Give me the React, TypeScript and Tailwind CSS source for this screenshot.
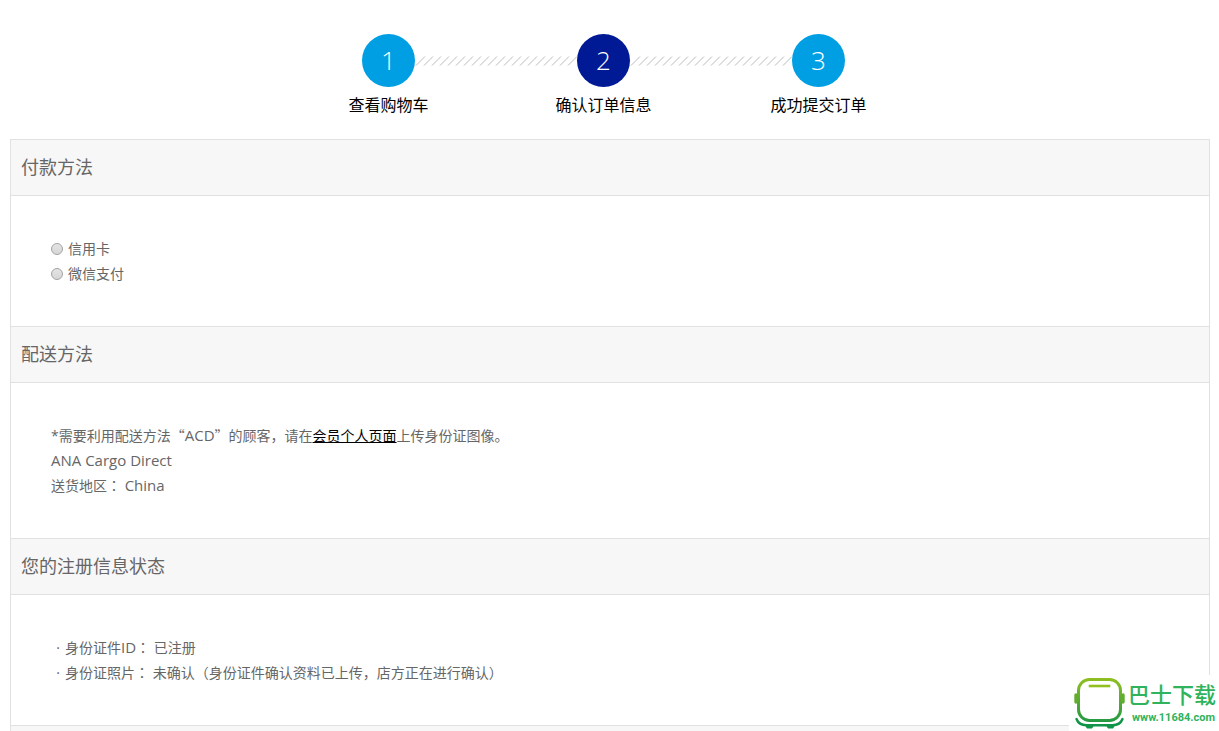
import React from 'react';

const steps = [
  { label: '查看购物车', circle: 'bg-[#009fe3]' },
  { label: '确认订单信息', circle: 'bg-[#001a96]' },
  { label: '成功提交订单', circle: 'bg-[#009fe3]' },
];

const Hatching = () => (
  <svg width="162" height="10" viewBox="0 0 162 10" fill="none" stroke="#777" strokeWidth="0.5" aria-hidden="true">
    {Array.from({ length: 20 }, (_, i) => (
      <path key={i} d={`M${i * 8 + 1} 9.500l9-9`} />
    ))}
  </svg>
);

const OrderSteps: React.FC = () => (
  <ol className="flex justify-center pt-[34px] pr-3">
    {steps.map((step, i) => (
      <React.Fragment key={step.label}>
        {i > 0 && (
          <li className="pt-[22px]" aria-hidden="true">
            <Hatching />
          </li>
        )}
        <li className="flex w-[53px] flex-col items-center gap-1.5">
          <span className={`flex h-[53px] w-[53px] items-center justify-center rounded-full pb-0.5 font-['Open_Sans',sans-serif] text-[26px] leading-none font-light text-white ${step.circle}`}>
            {i + 1}
          </span>
          <span className="text-base whitespace-nowrap text-black">{step.label}</span>
        </li>
      </React.Fragment>
    ))}
  </ol>
);

type PanelProps = { title?: string; children?: React.ReactNode };

const Panel: React.FC<PanelProps> = ({ title, children }) => (
  <section className="border-t border-[#e1e1e1]">
    <h2 className="h-14 border-b border-[#e1e1e1] bg-[#f7f7f7] px-2.5 text-lg leading-[54px] font-normal">{title}</h2>
    {children && <div className="p-10 text-sm leading-[25px]">{children}</div>}
  </section>
);

const PaymentOption: React.FC<{ value: string; label: string }> = ({ value, label }) => (
  <label className="flex items-center gap-[5px]">
    <input
      type="radio"
      name="payment"
      value={value}
      className="h-3 w-3 appearance-none rounded-full border border-[#a3a3a3] bg-linear-to-b from-[#e4e4e4] to-[#d6d6d6] checked:border-4"
    />
    {label}
  </label>
);

const Latin: React.FC<{ children: React.ReactNode }> = ({ children }) => (
  <span className="text-[15px]">{children}</span>
);

// full-width colon, centred in its box
const Colon = () => <span className="font-['Noto_Sans_CJK_TC',sans-serif]" lang="zh-TW">：</span>;

const BusLogo = () => (
  <svg className="shrink-0" width="52" height="52" viewBox="0 0 52 52" fill="none" aria-hidden="true">
    <defs>
      <linearGradient id="bus" x1="0" y1="0" x2="0" y2="52" gradientUnits="userSpaceOnUse">
        <stop offset="0" stopColor="#93c01f" />
        <stop offset="0.5" stopColor="#52a935" />
        <stop offset="1" stopColor="#109447" />
      </linearGradient>
    </defs>
    <rect x="5.500" y="2.500" width="42" height="41" rx="11" stroke="url(#bus)" strokeWidth="3" />
    <path d="M17 9h19" stroke="#93c01f" strokeWidth="2.600" strokeLinecap="square" />
    <path d="M3 18v7M50 18v7" stroke="#62ad30" strokeWidth="3.400" strokeLinecap="round" />
    <path d="M3.500 42c1.500 4 4.500 6.200 10 6.200h26c5.500 0 8.500-2.200 10-6.200" stroke="#109447" strokeWidth="2.400" strokeLinecap="round" />
    <path d="M12 48.500h9l-2 3h-5zM33 48.500h9l-2 3h-5z" fill="#109447" />
  </svg>
);

const SiteBadge = () => (
  <a href="#" className="absolute right-0 bottom-0 flex h-14 w-[150px] items-center gap-[3px] bg-white pl-1">
    <BusLogo />
    <span className="flex flex-col pt-0.5 whitespace-nowrap text-[#2fb35c]">
      <span className="text-[22px] leading-7 font-medium">巴士下载</span>
      <span className="pl-1 font-['Roboto','Liberation_Sans',sans-serif] text-[11px] leading-5 font-bold">
        www.11684.com
      </span>
    </span>
  </a>
);

const App: React.FC = () => {
  return (
    <div className="relative h-screen overflow-hidden bg-white font-['Open_Sans','Noto_Sans_CJK_SC',sans-serif] text-[#666]">
      <OrderSteps />

      <main className="mt-[22px] mr-[9px] ml-2.5 border-x border-[#e1e1e1]">
        <Panel title="付款方法">
          <PaymentOption value="card" label="信用卡" />
          <PaymentOption value="wechat" label="微信支付" />
        </Panel>

        <Panel title="配送方法">
          <p>
            *需要利用配送方法
            <span className="font-['Noto_Sans_CJK_SC',sans-serif]">“</span>
            <Latin>ACD</Latin>
            <span className="font-['Noto_Sans_CJK_SC',sans-serif]">”</span>
            的顾客，请在<a href="#" className="text-black underline">会员个人页面</a>上传身份证图像。
          </p>
          <p><Latin>ANA Cargo Direct</Latin></p>
          <p>送货地区<Colon /> <Latin>China</Latin></p>
        </Panel>

        <Panel title="您的注册信息状态">
          <ul>
            <li><span className="inline-block w-3.5 text-center">·</span>身份证件<Latin>ID</Latin><Colon /> 已注册</li>
            <li><span className="inline-block w-3.5 text-center">·</span>身份证照片<Colon /> 未确认（身份证件确认资料已上传，店方正在进行确认）</li>
          </ul>
        </Panel>

        <Panel />
      </main>

      <SiteBadge />
    </div>
  );
};

export default App;
